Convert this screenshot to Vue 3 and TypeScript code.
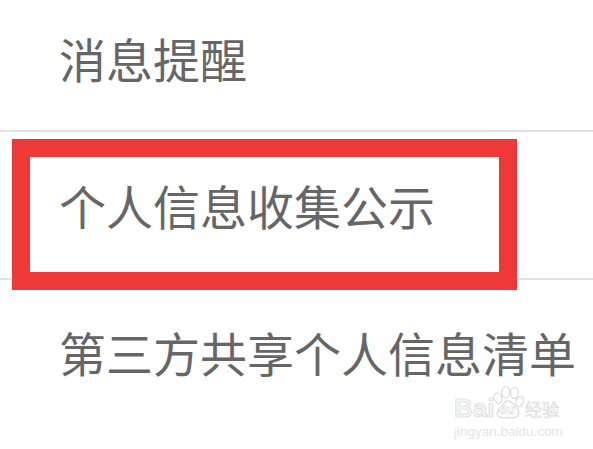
<script setup lang="ts">
const rows: string[] = ['消息提醒', '个人信息收集公示', '第三方共享个人信息清单']
</script>

<template>
  <div class="page">
    <div class="list">
      <div v-for="row in rows" :key="row" class="row">{{ row }}</div>
    </div>
    <div class="highlight"></div>
    <div class="mark">
      <div class="brand">
        <span class="bai">Bai</span>
        <svg class="paw" width="33" height="37" viewBox="0 0 38 42" fill="#fff" stroke="#dcdcdc" stroke-width="1.5">
          <ellipse cx="8" cy="15" rx="4.5" ry="6" transform="rotate(-22 8 15)" />
          <ellipse cx="17" cy="8" rx="4.5" ry="6.5" />
          <ellipse cx="27" cy="9" rx="4.5" ry="6.5" />
          <ellipse cx="33" cy="19" rx="4" ry="6" transform="rotate(22 33 19)" />
          <path d="M19 18c5 0 7 4 10 8 3 3 4 6 2 9-2 3-6 3-11 2-5 1-10 1-12-2-2-3 0-7 3-9 3-3 4-8 8-8z" />
          <text x="9" y="33" class="du">du</text>
        </svg>
        <span class="jy">经验</span>
      </div>
      <div class="url">jingyan.baidu.com</div>
    </div>
  </div>
</template>

<style scoped>
.page {
  position: relative;
  width: 593px;
  height: 449px;
  overflow: hidden;
  background: #fff;
  font-family: "Noto Sans CJK SC", "Noto Sans", sans-serif;
}
.list {
  display: flex;
  flex-direction: column;
}
.row {
  box-sizing: border-box;
  height: 147.5px;
  padding-left: 59px;
  display: flex;
  align-items: center;
  font-size: 47px;
  color: #666;
  border-bottom: 2px solid #e2e2e2;
}
.row:first-child {
  height: 132px;
  padding-bottom: 15px;
}
.row:last-child {
  border-bottom: none;
  padding-bottom: 4px;
}
.highlight {
  position: absolute;
  left: 12px;
  top: 139px;
  width: 505px;
  height: 151px;
  box-sizing: border-box;
  border: 18px solid #ef3838;
}
.mark {
  position: absolute;
  left: 454px;
  top: 384px;
  width: 110px;
  display: flex;
  flex-direction: column;
  color: #e2e2e2;
  font-family: "Liberation Sans", sans-serif;
}
.brand {
  display: flex;
  align-items: flex-end;
  height: 37px;
}
.bai {
  font-size: 26px;
  line-height: 26px;
  font-weight: 700;
  color: #f4f4f4;
  -webkit-text-stroke: 0.7px #d8d8d8;
}
.paw {
  margin: 0 0 -1px -3px;
  flex: none;
}
.du {
  font-size: 15px;
  font-weight: 700;
  fill: #fff;
  stroke: #d4d4d4;
  stroke-width: 0.6px;
}
.jy {
  font-family: "Noto Sans CJK SC", sans-serif;
  font-size: 17.5px;
  line-height: 24px;
  white-space: nowrap;
  color: #f4f4f4;
  -webkit-text-stroke: 0.5px #d8d8d8;
}
.url {
  font-size: 13.5px;
  line-height: 16px;
  margin-top: 3px;
  white-space: nowrap;
  color: #e4e4e4;
}
</style>
